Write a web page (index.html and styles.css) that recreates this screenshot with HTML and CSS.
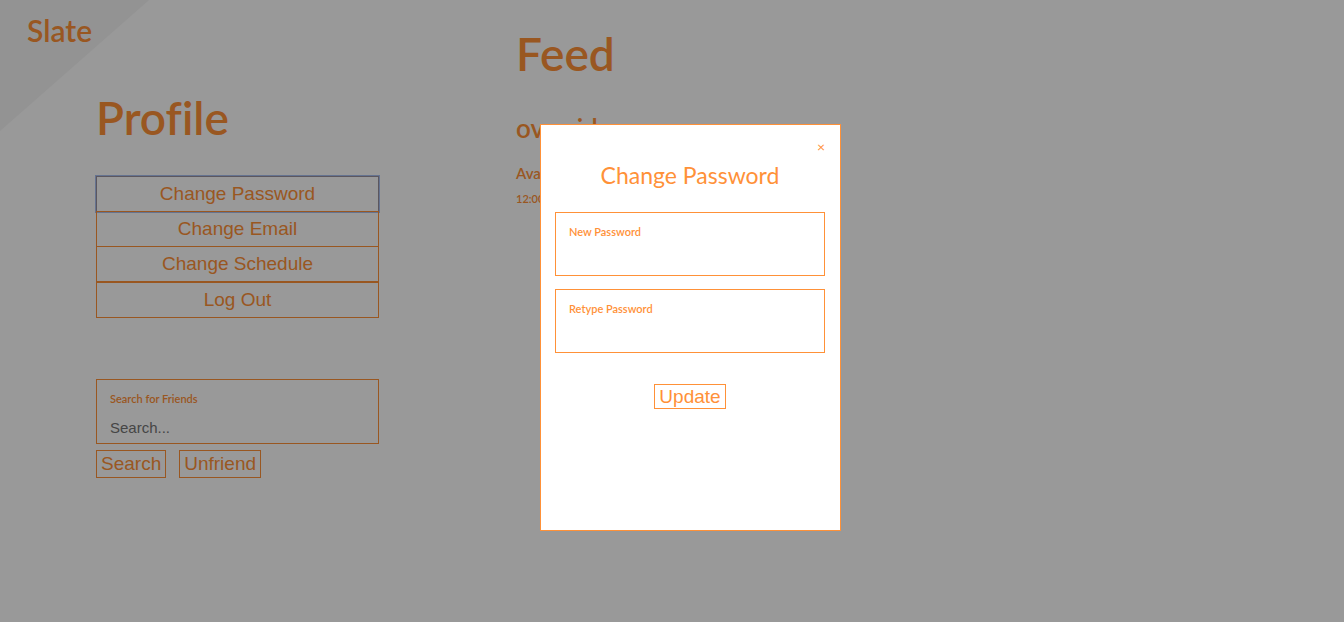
FILE: index.html
```html
<!DOCTYPE html>
<html lang="en">
<head>
<meta charset="utf-8">
<title>Slate</title>
<link rel="stylesheet" href="styles.css">
</head>
<body>
<header class="brand">
  <svg class="brand-corner" viewBox="0 0 150 132" aria-hidden="true"><path d="M0 0H149L0 131Z" fill="#f5f5f5"/></svg>
  <a class="brand-name" href="#">Slate</a>
</header>
<div class="page">
  <section class="profile">
    <h1 class="title">Profile</h1>
    <nav class="actions">
      <button class="action focused" type="button">Change Password</button>
      <button class="action" type="button">Change Email</button>
      <button class="action" type="button">Change Schedule</button>
      <button class="action last" type="button">Log Out</button>
    </nav>
    <form class="search">
      <div class="field search-field">
        <label class="label" for="search">Search for Friends</label>
        <input class="input" id="search" type="text" placeholder="Search...">
      </div>
      <div class="search-buttons">
        <button class="button" type="button">Search</button>
        <button class="button" type="button">Unfriend</button>
      </div>
    </form>
  </section>
  <main class="feed">
    <h1 class="title">Feed</h1>
    <h2 class="friend">overrid</h2>
    <h3 class="status">Available</h3>
    <p class="time">12:00</p>
  </main>
</div>
<div class="overlay">
  <form class="modal" role="dialog" aria-labelledby="modal-title">
    <button class="close" type="button" aria-label="Close">×</button>
    <h2 class="modal-title" id="modal-title">Change Password</h2>
    <div class="field">
      <label class="label" for="new-password">New Password</label>
      <input class="input" id="new-password" type="password">
    </div>
    <div class="field">
      <label class="label" for="retype-password">Retype Password</label>
      <input class="input" id="retype-password" type="password">
    </div>
    <button class="button update" type="button">Update</button>
  </form>
</div>
</body>
</html>
```
FILE: styles.css
```css
* {
  box-sizing: border-box;
}

body {
  margin: 0;
  min-height: 100vh;
  background: #fff;
  color: #ff9138;
  font-family: Lato, "Liberation Sans", sans-serif;
  font-variant-ligatures: none;
}

h1, h2, h3, p {
  margin: 0;
}

button, input {
  margin: 0;
  border: 0;
  background: none;
  color: inherit;
  font-family: "Liberation Sans", Arial, sans-serif;
}

.brand {
  position: absolute;
  top: 0;
  left: 0;
  padding: 12px 27px;
}

.brand-corner {
  position: absolute;
  top: 0;
  left: 0;
  width: 150px;
  height: 132px;
}

.brand-name {
  position: relative;
  color: inherit;
  font-size: 30px;
  font-weight: 600;
  line-height: 36px;
  text-decoration: none;
}

.page {
  display: grid;
  grid-template-columns: 283px 1fr;
  column-gap: 137px;
  padding: 24px 96px;
}

.profile {
  padding-top: 64px;
}

.title {
  font-size: 46px;
  font-weight: 600;
  line-height: 60px;
}

.actions {
  display: flex;
  flex-direction: column;
  margin-top: 28px;
}

.action {
  height: 36px;
  margin-bottom: -1px;
  border: 1px solid #ff9138;
  font-size: 19px;
}

.action.last {
  margin: 1px 0 0;
}

.focused {
  border-color: #9a929e;
  outline: 1px solid #a9c0f0;
}

.search {
  margin-top: 61px;
}

.field {
  display: flex;
  flex-direction: column;
  height: 64px;
  padding: 11px 13px 0;
  border: 1px solid #ff9138;
}

.search-field {
  height: 65px;
}

.label {
  font-size: 11px;
  font-weight: 600;
  line-height: 16px;
}

.input {
  width: 100%;
  height: 24px;
  margin-top: 8px;
  padding: 0;
  outline: 0;
  font-size: 15px;
}

.input::placeholder {
  color: #757575;
}

.search-buttons {
  display: flex;
  gap: 13px;
  margin-top: 6px;
}

.button {
  height: 28px;
  padding: 0 4px;
  border: 1px solid #ff9138;
  font-size: 19px;
}

.friend {
  margin-top: 28px;
  font-size: 26px;
  font-weight: 600;
  line-height: 32px;
}

.status {
  margin-top: 19px;
  font-size: 15px;
  font-weight: 600;
  line-height: 20px;
}

.time {
  margin-top: 8px;
  font-size: 11px;
  font-weight: 600;
  line-height: 16px;
}

.overlay {
  position: fixed;
  inset: 0;
  display: flex;
  justify-content: center;
  align-items: flex-start;
  padding: 124px 0 0 37px;
  background: rgba(0, 0, 0, 0.4);
}

.modal {
  display: flex;
  flex-direction: column;
  gap: 13px;
  width: 301px;
  min-height: 407px;
  padding: 14px 15px 14px 14px;
  border: 1px solid #ff9138;
  background: #fff;
}

.close {
  align-self: flex-end;
  height: 16px;
  padding: 0;
  font-family: Lato, sans-serif;
  font-size: 14px;
  line-height: 16px;
}

.modal-title {
  margin: -8px 0 9px;
  font-size: 23px;
  font-weight: 400;
  line-height: 30px;
  text-align: center;
}

.update {
  align-self: center;
  height: 25px;
  margin-top: 18px;
}
```
